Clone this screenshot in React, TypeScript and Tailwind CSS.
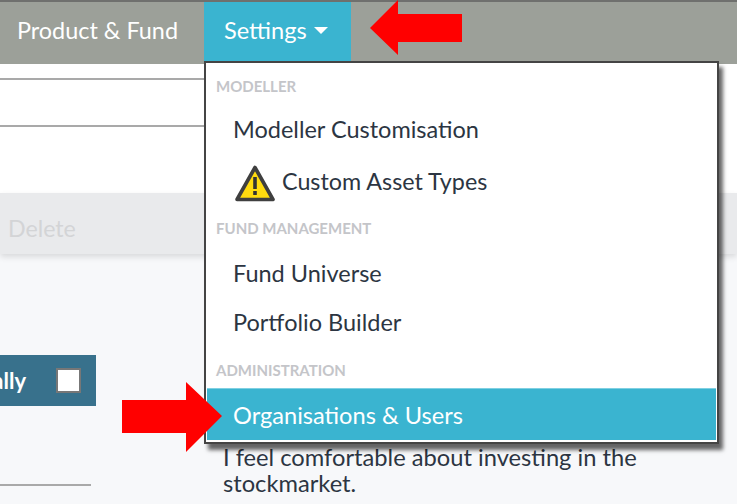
import React from "react";

function Warning() {
  return (
    <svg width="42" height="38" viewBox="0 0 42 38" className="shrink-0">
      <path d="M21 2.5 L39 34.5 H3 Z" fill="#ffdb0f" stroke="#3f3f3f" strokeWidth="3.6" strokeLinejoin="round" />
      <rect x="19.2" y="12" width="3.6" height="12" fill="#333" />
      <rect x="19.2" y="26" width="3.6" height="4" fill="#333" />
    </svg>
  );
}

function Header({ children }: { children: React.ReactNode }) {
  return <div className="pl-[10px] text-[15px] leading-[18px] font-bold text-[#c4c5c9]">{children}</div>;
}

function Item({ children }: { children: React.ReactNode }) {
  return <div className="pl-[27px] text-[23.5px] leading-[28px] text-[#2c3542]">{children}</div>;
}

export default function App() {
  return (
    <div className="relative flex h-[504px] w-[737px] flex-col overflow-hidden bg-[#f7f8fa] font-['Lato',sans-serif]">
      <div className="flex h-[64px] shrink-0 border-t-2 border-[#6f706e] bg-[#9ca099] pl-[17px] text-[23.4px] text-white">
        <div className="w-[187px] pt-[14px] leading-[28px]">Product &amp; Fund</div>
        <div className="flex h-[59px] w-[147px] items-start gap-[7px] bg-[#3ab4d0] pl-[20px] pt-[14px] leading-[28px]">
          <span className="text-[23.6px]">Settings</span>
          <span className="mt-[11px] h-0 w-0 border-x-[7px] border-t-[7px] border-x-transparent border-t-white" />
        </div>
      </div>

      <div className="h-[129px] shrink-0 bg-white pt-[14px]">
        <div className="h-[47px] w-[204px] border-t-2 border-[#a9a9a9]" />
        <div className="h-[2px] w-[204px] bg-[#a9a9a9]" />
      </div>

      <div className="h-[61px] shrink-0 bg-[#e9eaec] pl-[8px] pt-[21px] text-[23.2px] leading-[28px] text-[#d3d4d6] shadow-[0_3px_6px_rgba(0,0,0,0.12)]">
        Delete
      </div>

      <div className="flex flex-1">
        <div className="w-[223px] shrink-0 pt-[101px]">
          <div className="flex h-[51px] w-[96px] items-center justify-end overflow-hidden bg-[#38718c] pr-[15px] text-[22px] font-bold text-white">
            <span className="mr-[30px] whitespace-nowrap">Manually</span>
            <span className="h-[25px] w-[25px] shrink-0 border-2 border-[#777] bg-white" />
          </div>
          <div className="mt-[78px] h-[2px] w-[91px] bg-[#a9a9a9]" />
        </div>
        <div className="w-[440px] pt-[190px] text-[23.7px] leading-[26px] text-[#2c3542]">
          I feel comfortable about investing in the stockmarket.
        </div>
      </div>

      <div className="absolute left-[204px] top-[61px] h-[383px] w-[515px] border-2 border-[#444] bg-white pt-[14px] shadow-[4px_6px_4px_rgba(0,0,0,0.6)]">
        <Header>MODELLER</Header>
        <div className="pt-[20px]"><Item>Modeller Customisation</Item></div>
        <div className="mt-[22px] flex h-[38px] items-center pl-[28px] text-[23.3px] leading-[28px] text-[#2c3542]">
          <Warning />
          <span className="ml-[6px] -mt-[6px]">Custom Asset Types</span>
        </div>
        <div className="pt-[16px]"><Header>FUND MANAGEMENT</Header></div>
        <div className="pt-[22px]"><Item>Fund Universe</Item></div>
        <div className="pt-[21px]"><Item>Portfolio Builder</Item></div>
        <div className="pt-[25px]"><Header>ADMINISTRATION</Header></div>
        <div className="mx-[1px] mt-[9px] flex h-[52px] items-center border-t border-[#7fd0e2] bg-[#3ab4d0] pl-[26px] pt-[2px] text-[23.6px] text-white">
          Organisations &amp; Users
        </div>
      </div>

      <svg className="absolute left-0 top-0" width="737" height="504">
        <polygon points="370,28 398,0 398,14 462,14 462,42 398,42 398,55" fill="#ff0000" />
        <polygon points="122,400 186,400 186,382 222,416 186,452 186,433 122,433" fill="#ff0000" />
      </svg>
    </div>
  );
}
